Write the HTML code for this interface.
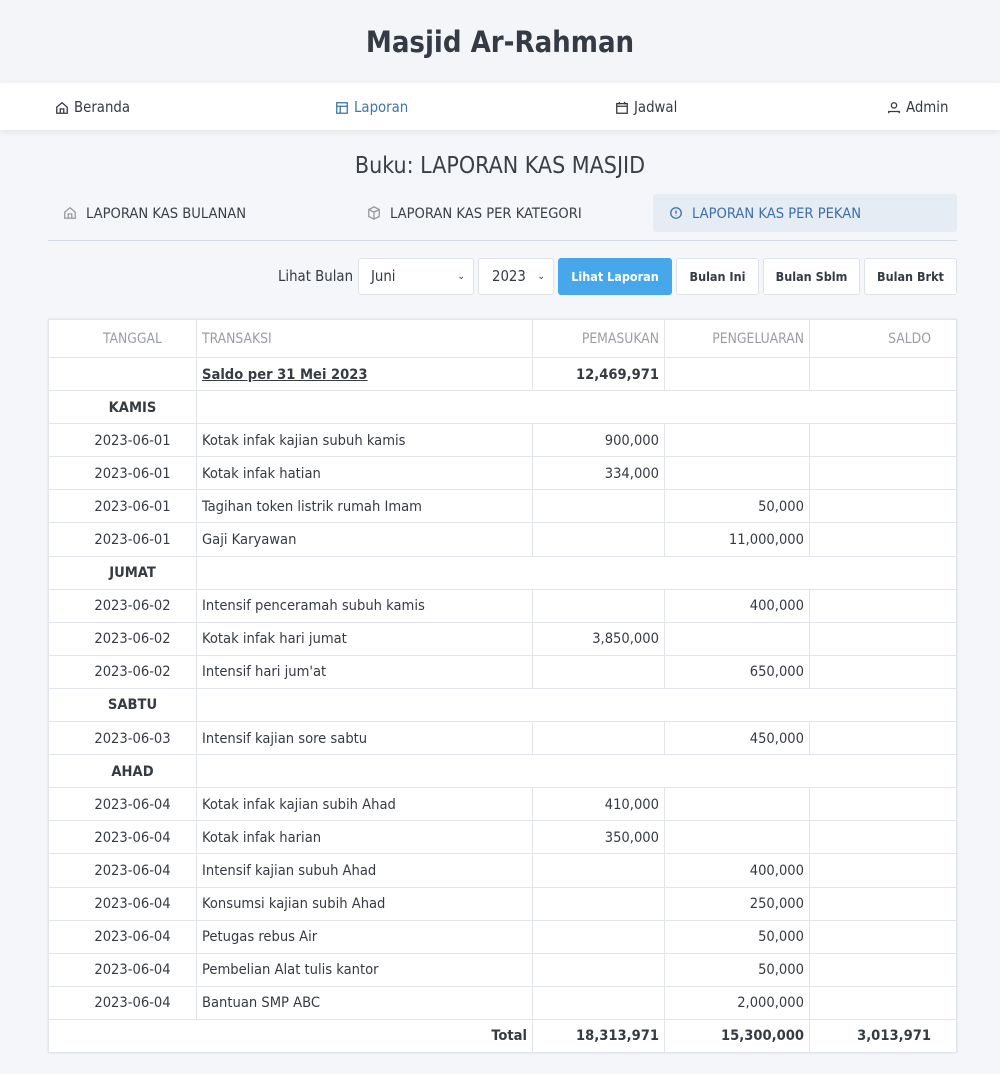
<!DOCTYPE html>
<html><head><meta charset="utf-8"><style>
*{box-sizing:border-box;margin:0;padding:0}
body{width:1000px;height:1074px;background:#f4f6f9;font-family:"DejaVu Sans Condensed","DejaVu Sans","Liberation Sans",sans-serif;color:#363b42;font-size:14px;overflow:hidden}
.top{height:83px;background:#f3f5f8;text-align:center;font-size:29px;font-weight:bold;line-height:84px;color:#353b44}
.nav{height:47px;background:#fff;box-shadow:0 2px 6px rgba(0,0,0,.08);position:relative;font-size:14.8px}
.nav span{position:absolute;top:15px;display:flex;align-items:center;gap:5px}
.nav svg,.tabs svg{width:14px;height:14px;fill:none;stroke:currentColor;stroke-width:1.5}
h2{text-align:center;font-weight:normal;font-size:23px;position:absolute;top:153px;width:1000px;color:#3a3f46}
.tabs{position:absolute;top:194px;left:48px;width:909px;height:38px;font-size:14.6px}
.tabs div{position:absolute;top:0;height:38px;display:flex;align-items:center;gap:9px}
.line{position:absolute;top:240px;left:48px;width:909px;height:1px;background:#d5dbe4}
.ctl{position:absolute;top:258px;height:37px}
.box{background:#fff;border:1px solid #dfe3e8;border-radius:3px;font-size:14.8px;display:flex;align-items:center}
.btn{font-weight:bold;font-size:12.5px;justify-content:center}
table{position:absolute;top:319px;left:48px;width:909px;border-collapse:collapse;background:#fff;box-shadow:0 0 2px rgba(0,0,0,.12)}
td,th{border:1px solid #e2e5e9;height:33.1px;padding:0 5px;font-size:14.6px;white-space:nowrap}
th{font-weight:normal;color:#9a9ea4;height:38px;font-size:13.8px}
.c{text-align:center;padding-left:25px}.r{text-align:right}.b{font-weight:bold}
</style></head><body>
<div class="top">Masjid Ar-Rahman</div>
<div class="nav">
<span style="left:55px;top:16px"><svg viewBox="0 0 16 16"><path d="M2 7L8 2l6 5v7H2z M6 14V9h4v5"/></svg>Beranda</span>
<span style="left:335px;top:16px;color:#3f76ad"><svg viewBox="0 0 16 16"><rect x="2" y="2" width="12" height="12"/><path d="M2 6h12M6 6v8"/></svg>Laporan</span>
<span style="left:615px;top:16px"><svg viewBox="0 0 16 16"><rect x="2" y="3" width="12" height="11"/><path d="M2 6h12M5 1v3M11 1v3"/></svg>Jadwal</span>
<span style="left:887px;top:16px"><svg viewBox="0 0 16 16"><circle cx="8" cy="5" r="3"/><path d="M2 14v-2h12v2"/></svg>Admin</span>
</div>
<h2>Buku: LAPORAN KAS MASJID</h2>
<div class="tabs">
<div style="left:15px;color:#3a3f46"><svg viewBox="0 0 16 16" style="color:#999"><path d="M2 7L8 2l6 5v7H2z M6 14V9h4v5"/></svg>LAPORAN KAS BULANAN</div>
<div style="left:319px;color:#3a3f46"><svg viewBox="0 0 16 16" style="color:#999"><path d="M8 1l6 3v8l-6 3-6-3V4z M2 4l6 3 6-3M8 7v8"/></svg>LAPORAN KAS PER KATEGORI</div>
<div style="left:605px;width:304px;background:#e6ecf4;border-radius:3px;padding-left:16px;color:#3d6fa6"><svg viewBox="0 0 16 16"><circle cx="8" cy="8" r="6"/><path d="M8 5v4M8 11v.5"/></svg>LAPORAN KAS PER PEKAN</div>
</div>
<div class="line"></div>
<div class="ctl" style="left:278px;line-height:37px;font-size:14.8px">Lihat Bulan</div>
<div class="ctl box" style="left:358px;width:116px;padding-left:12px">Juni<span style="position:absolute;right:8px;font-size:10px">&#8964;</span></div>
<div class="ctl box" style="left:478px;width:76px;padding-left:13px">2023<span style="position:absolute;right:8px;font-size:10px">&#8964;</span></div>
<div class="ctl box btn" style="left:558px;width:114px;background:#47a7eb;border-color:#47a7eb;color:#fff">Lihat Laporan</div>
<div class="ctl box btn" style="left:676px;width:83px">Bulan Ini</div>
<div class="ctl box btn" style="left:763px;width:97px">Bulan Sblm</div>
<div class="ctl box btn" style="left:864px;width:93px">Bulan Brkt</div>
<table>
<tr><th class="c" style="width:148px">TANGGAL</th><th style="text-align:left;width:336px">TRANSAKSI</th><th class="r" style="width:132px">PEMASUKAN</th><th class="r" style="width:145px">PENGELUARAN</th><th class="r" style="padding-right:25px">SALDO</th></tr>
<tr><td></td><td class="b"><u>Saldo per 31 Mei 2023</u></td><td class="r b">12,469,971</td><td></td><td></td></tr>
<tr><td class="c b">KAMIS</td><td colspan="4"></td></tr>
<tr><td class="c">2023-06-01</td><td>Kotak infak kajian subuh kamis</td><td class="r">900,000</td><td></td><td></td></tr>
<tr><td class="c">2023-06-01</td><td>Kotak infak hatian</td><td class="r">334,000</td><td></td><td></td></tr>
<tr><td class="c">2023-06-01</td><td>Tagihan token listrik rumah Imam</td><td></td><td class="r">50,000</td><td></td></tr>
<tr><td class="c">2023-06-01</td><td>Gaji Karyawan</td><td></td><td class="r">11,000,000</td><td></td></tr>
<tr><td class="c b">JUMAT</td><td colspan="4"></td></tr>
<tr><td class="c">2023-06-02</td><td>Intensif penceramah subuh kamis</td><td></td><td class="r">400,000</td><td></td></tr>
<tr><td class="c">2023-06-02</td><td>Kotak infak hari jumat</td><td class="r">3,850,000</td><td></td><td></td></tr>
<tr><td class="c">2023-06-02</td><td>Intensif hari jum'at</td><td></td><td class="r">650,000</td><td></td></tr>
<tr><td class="c b">SABTU</td><td colspan="4"></td></tr>
<tr><td class="c">2023-06-03</td><td>Intensif kajian sore sabtu</td><td></td><td class="r">450,000</td><td></td></tr>
<tr><td class="c b">AHAD</td><td colspan="4"></td></tr>
<tr><td class="c">2023-06-04</td><td>Kotak infak kajian subih Ahad</td><td class="r">410,000</td><td></td><td></td></tr>
<tr><td class="c">2023-06-04</td><td>Kotak infak harian</td><td class="r">350,000</td><td></td><td></td></tr>
<tr><td class="c">2023-06-04</td><td>Intensif kajian subuh Ahad</td><td></td><td class="r">400,000</td><td></td></tr>
<tr><td class="c">2023-06-04</td><td>Konsumsi kajian subih Ahad</td><td></td><td class="r">250,000</td><td></td></tr>
<tr><td class="c">2023-06-04</td><td>Petugas rebus Air</td><td></td><td class="r">50,000</td><td></td></tr>
<tr><td class="c">2023-06-04</td><td>Pembelian Alat tulis kantor</td><td></td><td class="r">50,000</td><td></td></tr>
<tr><td class="c">2023-06-04</td><td>Bantuan SMP ABC</td><td></td><td class="r">2,000,000</td><td></td></tr>
<tr><td colspan="2" class="r b">Total</td><td class="r b">18,313,971</td><td class="r b">15,300,000</td><td class="r b" style="padding-right:25px">3,013,971</td></tr>
</table>
</body></html>
